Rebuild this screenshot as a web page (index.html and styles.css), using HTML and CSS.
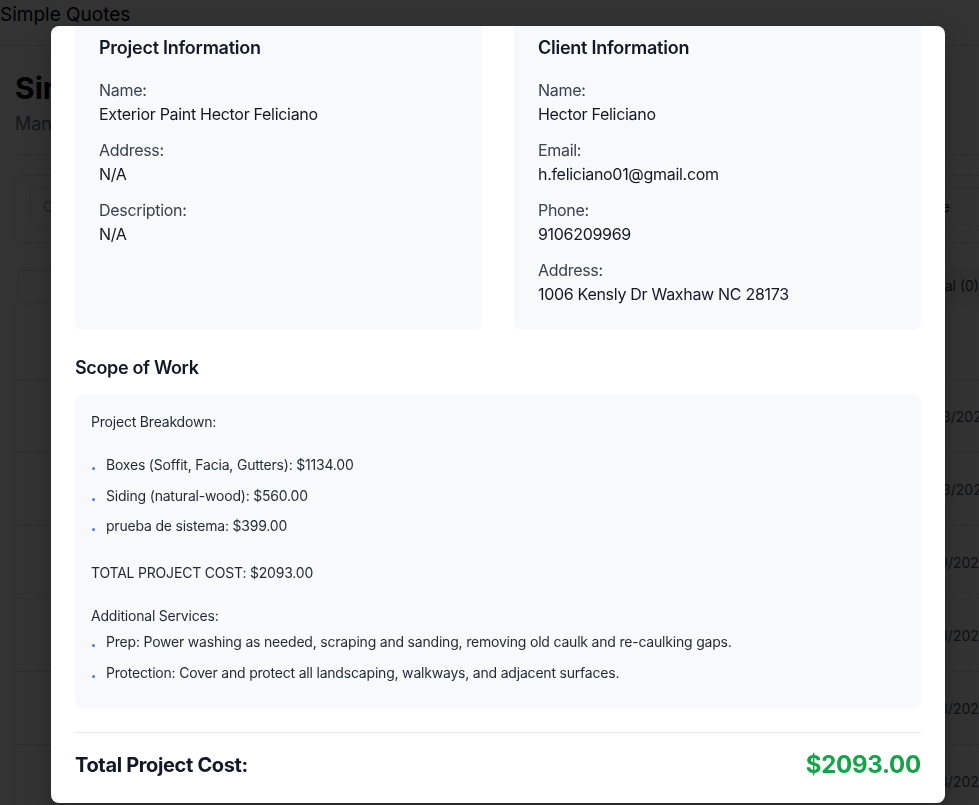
FILE: index.html
```html
<!DOCTYPE html>
<html lang="en">
<head>
<meta charset="utf-8">
<title>Simple Quotes</title>
<link rel="stylesheet" href="styles.css">
</head>
<body>
<div class="page">
  <header class="topbar">Simple Quotes</header>
  <main class="main">
    <h1 class="page-title">Simple Quotes</h1>
    <p class="page-sub">Manage your quotes and estimates</p>
    <hr class="rule">
    <section class="filters">
      <div class="search">Client or project name</div>
      <div class="select"><span>Sort by Date</span></div>
    </section>
    <nav class="tabs">
      <span class="tab active">All (6)</span>
      <span class="tab">Draft (0)</span>
      <span class="tab">Sent (6)</span>
      <span class="tab">Total (0)</span>
    </nav>
    <section class="table">
      <div class="thead"><span>Client</span><span>Project</span><span>Date</span></div>
      <div class="trow"><span>Hector Feliciano</span><span>Exterior Paint</span><span class="date">07/23/2025</span></div>
      <div class="trow"><span>Client</span><span>Interior Paint</span><span class="date">07/23/2025</span></div>
      <div class="trow"><span>Client</span><span>Cabinets</span><span class="date">07/19/2025</span></div>
      <div class="trow"><span>Client</span><span>Deck Stain</span><span class="date">07/13/2025</span></div>
      <div class="trow"><span>Client</span><span>Exterior Paint</span><span class="date">07/13/2025</span></div>
      <div class="trow"><span>Client</span><span>Trim</span><span class="date">07/13/2025</span></div>
    </section>
  </main>
</div>

<div class="overlay"></div>

<div class="modal">
  <div class="modal-body">
    <div class="info-grid">
      <div class="info-card">
        <h3 class="card-title">Project Information</h3>
        <div class="field"><div class="label">Name:</div><div class="value">Exterior Paint Hector Feliciano</div></div>
        <div class="field"><div class="label">Address:</div><div class="value">N/A</div></div>
        <div class="field"><div class="label">Description:</div><div class="value">N/A</div></div>
      </div>
      <div class="info-card">
        <h3 class="card-title">Client Information</h3>
        <div class="field"><div class="label">Name:</div><div class="value">Hector Feliciano</div></div>
        <div class="field"><div class="label">Email:</div><div class="value">h.feliciano01@gmail.com</div></div>
        <div class="field"><div class="label">Phone:</div><div class="value">9106209969</div></div>
        <div class="field"><div class="label">Address:</div><div class="value">1006 Kensly Dr Waxhaw NC 28173</div></div>
      </div>
    </div>

    <h3 class="section-title">Scope of Work</h3>
    <div class="scope">
      <p class="sow-line">Project Breakdown:</p>
      <ul class="sow-list breakdown">
        <li><span class="dot"></span>Boxes (Soffit, Facia, Gutters): $1134.00</li>
        <li><span class="dot"></span>Siding (natural-wood): $560.00</li>
        <li><span class="dot"></span>prueba de sistema: $399.00</li>
      </ul>
      <p class="sow-line total-line">TOTAL PROJECT COST: $2093.00</p>
      <p class="sow-line extra-line">Additional Services:</p>
      <ul class="sow-list services">
        <li><span class="dot"></span>Prep: Power washing as needed, scraping and sanding, removing old caulk and re-caulking gaps.</li>
        <li><span class="dot"></span>Protection: Cover and protect all landscaping, walkways, and adjacent surfaces.</li>
      </ul>
    </div>

    <div class="total-row">
      <span class="total-label">Total Project Cost:</span>
      <span class="total-amount">$2093.00</span>
    </div>
  </div>
</div>
</body>
</html>
```

FILE: styles.css
```css
html, body {
  margin: 0;
  padding: 0;
  overflow: hidden;
  background: #ffffff;
}

body {
  font-family: Inter, "Noto Sans", "Liberation Sans", sans-serif;
  color: #111827;
}

/* ---------- background page ---------- */
.page {
  width: 1010px;
}

.topbar {
  height: 45px;
  line-height: 30px;
  font-size: 19px;
  color: #000;
  border-bottom: 1px solid #e5e7eb;
}

.main {
  padding: 0 0 0 14px;
}

.page-title {
  margin: 24px 0 4px 1px;
  font-size: 30px;
  line-height: 36px;
  font-weight: 700;
  color: #000;
}

.page-sub {
  margin: 0 0 0 1px;
  font-size: 18px;
  line-height: 28px;
  color: #6b7280;
}

.rule {
  margin: 16px 0 0 0;
  border: 0;
  border-top: 1px solid #e5e7eb;
}

.filters {
  margin-top: 20px;
  height: 68px;
  border: 1px solid #e5e7eb;
  border-radius: 8px;
  padding: 12px 15px;
  box-sizing: border-box;
  display: flex;
  gap: 12px;
}

.search {
  flex: 1;
  height: 38px;
  box-sizing: border-box;
  border: 1px solid #e5e7eb;
  border-radius: 6px;
  padding: 0 12px;
  line-height: 36px;
  font-size: 14px;
  color: #9ca3af;
}

.select {
  width: 150px;
  height: 38px;
  box-sizing: border-box;
  border: 1px solid #e5e7eb;
  border-radius: 6px;
  padding: 0 43px 0 12px;
  line-height: 36px;
  font-size: 14px;
  color: #111827;
  text-align: right;
}

.tabs {
  margin: 24px 0 0 3px;
  height: 38px;
  box-sizing: border-box;
  background: #f3f4f6;
  border-radius: 6px;
  display: flex;
  align-items: center;
  justify-content: space-between;
  padding: 4px 31px 4px 0;
  font-size: 14px;
  color: #374151;
}

.tab {
  line-height: 30px;
}

.tab.active {
  background: #ffffff;
  border: 1px solid #e5e7eb;
  border-radius: 6px;
  padding: 0 40px;
}

.table {
  border-left: 1px solid #e5e7eb;
  font-size: 14px;
  color: #6b7280;
}

.thead,
.trow {
  display: grid;
  grid-template-columns: 300px 557px 1fr;
  align-items: center;
  padding-left: 40px;
  border-bottom: 1px solid #e5e7eb;
}

.thead {
  height: 74px;
  font-weight: 600;
}

.trow {
  height: 72px;
}

.date {
  color: #4b5563;
  white-space: nowrap;
}

/* ---------- overlay + modal ---------- */
.overlay {
  position: fixed;
  inset: 0;
  background: rgba(0, 0, 0, 0.8);
}

.modal {
  position: fixed;
  left: 51px;
  top: 26px;
  width: 894px;
  height: 777px;
  background: #ffffff;
  border-radius: 8px;
  overflow: hidden;
  box-shadow: 0 10px 25px rgba(0, 0, 0, 0.25);
}

.modal-body {
  margin-top: -16px;
  padding: 0 24px 24px;
}

.info-grid {
  display: grid;
  grid-template-columns: 1fr 1fr;
  gap: 32px;
}

.info-card {
  background: #f8f9fb;
  border-radius: 8px;
  padding: 24px;
}

.card-title {
  margin: 0 0 16px;
  font-size: 18px;
  line-height: 28px;
  font-weight: 600;
  letter-spacing: -0.25px;
  color: #111827;
}

.field {
  margin-bottom: 12px;
  font-size: 16px;
  line-height: 24px;
  letter-spacing: -0.3px;
}

.field:last-child {
  margin-bottom: 0;
}

.label {
  color: #374151;
}

.value {
  color: #111827;
}

.section-title {
  margin: 24px 0 12px;
  font-size: 18px;
  line-height: 28px;
  font-weight: 600;
  letter-spacing: -0.35px;
  color: #111827;
}

.scope {
  background: #f8f9fb;
  border-radius: 8px;
  padding: 18px 16px 25px;
  font-size: 14px;
  line-height: 20px;
  letter-spacing: -0.2px;
  color: #1f2937;
}

.sow-line {
  margin: 0;
}

.sow-list {
  list-style: none;
  margin: 0;
  padding: 0;
}

.sow-list li {
  display: flex;
  align-items: baseline;
}

.breakdown {
  margin-top: 23px;
}

.breakdown li + li {
  margin-top: 11px;
}

.breakdown li:last-child {
  margin-top: 10px;
}

.total-line {
  margin-top: 27px;
}

.extra-line {
  margin-top: 23px;
}

.services {
  margin-top: 6px;
}

.services li + li {
  margin-top: 11px;
}

.dot {
  display: inline-block;
  width: 3px;
  height: 3px;
  border-radius: 50%;
  background: #3b82f6;
  margin: 0 11px 0 1px;
  flex: none;
}

.total-row {
  margin-top: 24px;
  border-top: 1px solid #e5e7eb;
  padding-top: 16px;
  display: flex;
  justify-content: space-between;
  align-items: center;
}

.total-label {
  font-size: 20px;
  line-height: 28px;
  font-weight: 700;
  letter-spacing: -0.35px;
  color: #111827;
}

.total-amount {
  font-size: 24px;
  line-height: 32px;
  font-weight: 700;
  letter-spacing: -0.25px;
  color: #16a34a;
}
```
